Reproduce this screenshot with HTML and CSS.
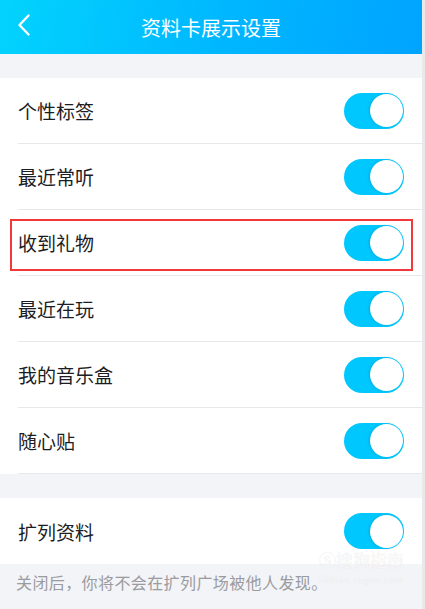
FILE: index.html
```html
<html>
    <head>
        <title>资料卡展示设置</title>
        <link rel="stylesheet" href="styles.css">
    </head>
    <body>
        <div class="page">
            <div class="topbar">
                <span class="back">
                    <svg width="14" height="24" viewBox="0 0 14 24"><path d="M11.5 2.5 L2.5 12 L11.5 21.5" fill="none" stroke="#fff" stroke-width="2.4" stroke-linecap="round" stroke-linejoin="round"/></svg>
                </span>
                <span class="title">资料卡展示设置</span>
            </div>

            <div class="gap"></div>
            <div class="group">
                <div class="row"><span class="label">个性标签</span><span class="switch"><i></i></span></div>
                <div class="row"><span class="label">最近常听</span><span class="switch"><i></i></span></div>
                <div class="row marked"><span class="label">收到礼物</span><span class="switch"><i></i></span></div>
                <div class="row"><span class="label">最近在玩</span><span class="switch"><i></i></span></div>
                <div class="row"><span class="label">我的音乐盒</span><span class="switch"><i></i></span></div>
                <div class="row"><span class="label">随心贴</span><span class="switch"><i></i></span></div>
            </div>

            <div class="gap"></div>
            <div class="group">
                <div class="row last"><span class="label">扩列资料</span><span class="switch"><i></i></span></div>
            </div>
            <p class="note">关闭后，你将不会在扩列广场被他人发现。</p>

            <div class="mark">
                <span class="mark-top">Ⓢ搜狗指南</span>
                <span class="mark-url">zhinan.sogou.com</span>
            </div>
        </div>
    </body>
</html>
```

FILE: styles.css
```css
body {
    margin: 0;
    background: #e9e9ea;
    font-family: "Noto Sans CJK SC", "Noto Sans", sans-serif;
}
.page {
    position: relative;
    width: 422px;
    height: 609px;
    background: #f3f4f7;
    overflow: hidden;
}
.topbar {
    height: 54px;
    background: linear-gradient(100deg, #02d3fd 0%, #00b6ff 55%, #00a4ff 100%);
    display: flex;
    align-items: center;
    justify-content: center;
    position: relative;
}
.back {
    position: absolute;
    left: 17px;
    top: 13px;
    display: flex;
}
.title {
    color: #fff;
    font-size: 20px;
}
.gap {
    height: 24px;
}
.group {
    background: #fff;
}
.row {
    height: 65px;
    margin-left: 18px;
    padding-right: 18px;
    border-bottom: 1px solid #e6e8eb;
    display: flex;
    align-items: center;
    justify-content: space-between;
    position: relative;
}
.row.last {
    border-bottom: 0;
    height: 66px;
}
.label {
    font-size: 19px;
    color: #1c1c24;
}
.marked::after {
    content: "";
    position: absolute;
    left: -8px;
    right: 9px;
    top: 9px;
    bottom: 4px;
    border: 2.5px solid #f1393b;
}
.switch {
    width: 60px;
    height: 36px;
    border-radius: 18px;
    background: #00c8fe;
    display: flex;
    align-items: center;
    justify-content: flex-end;
    padding-right: 1px;
    box-sizing: border-box;
}
.switch i {
    width: 33px;
    height: 33px;
    border-radius: 50%;
    background: #fff;
    box-shadow: -1px 0 3px rgba(0, 120, 170, 0.35);
}
.note {
    margin: 0;
    padding: 6px 16px;
    font-size: 16px;
    letter-spacing: 0.4px;
    color: #9a9ba0;
}
.mark {
    position: absolute;
    right: 18px;
    top: 548px;
    display: flex;
    flex-direction: column;
    align-items: flex-end;
    gap: 2px;
    color: rgba(255, 255, 255, 0.8);
    text-shadow: 0 0 1px rgba(0, 0, 0, 0.12);
}
.mark-top {
    font-size: 17px;
    line-height: 24px;
}
.mark-url {
    font-size: 9px;
    line-height: 12px;
    letter-spacing: 0.5px;
}
```
